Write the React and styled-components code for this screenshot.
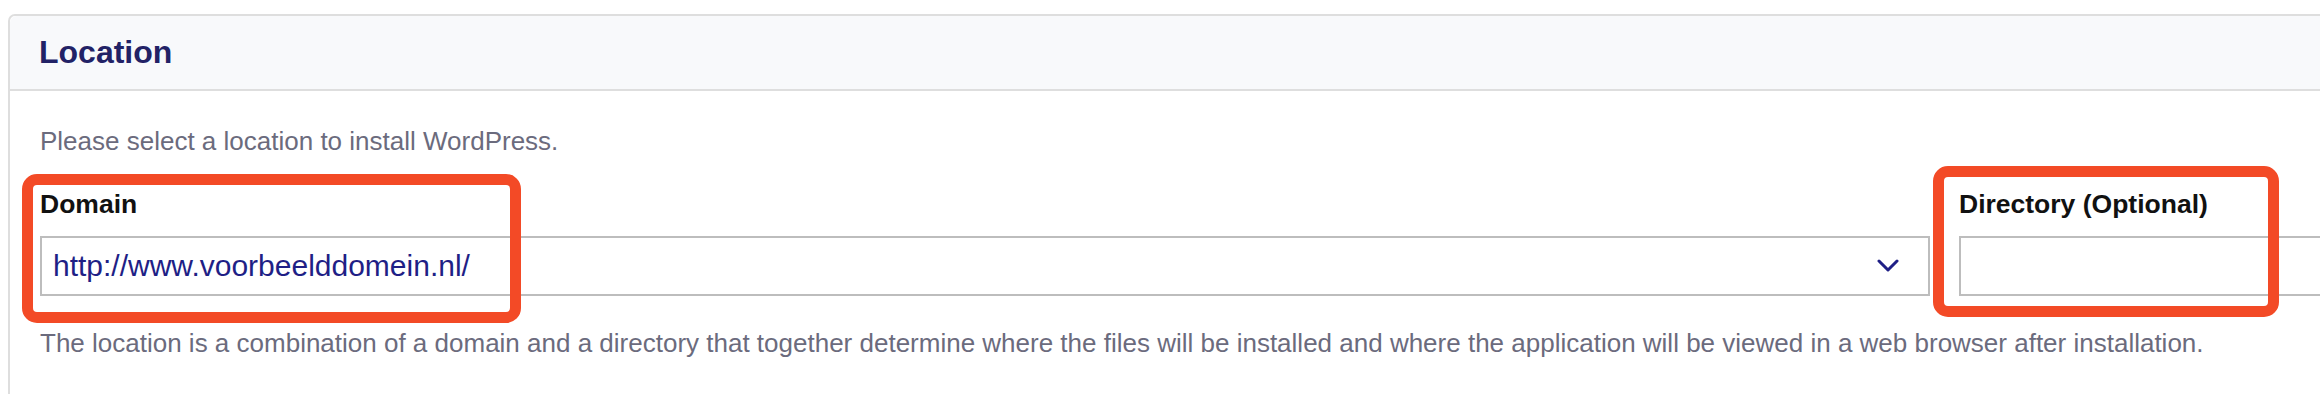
import React from 'react'
import styled, { createGlobalStyle } from 'styled-components'

const GlobalStyle = createGlobalStyle`
  html, body {
    margin: 0;
    padding: 0;
    background: #ffffff;
    overflow: hidden;
  }
  body {
    font-family: "Liberation Sans", Arial, sans-serif;
  }
`

const Page = styled.div`
  padding: 14px 0 0 8px;
`

const Card = styled.section`
  width: 2420px;
  border: 2px solid #dedede;
  border-radius: 7px;
  background: #ffffff;
`

const CardHeader = styled.header`
  height: 73px;
  display: flex;
  align-items: center;
  padding-left: 29px;
  background: #f8f9fb;
  border-bottom: 2px solid #dedede;
  border-radius: 7px 7px 0 0;
`

const Title = styled.h2`
  margin: 0;
  font-size: 32px;
  font-weight: bold;
  color: #222266;
`

const CardBody = styled.div`
  padding: 34px 30px 60px 30px;
`

const Intro = styled.p`
  margin: 0 0 32px 0;
  font-size: 26px;
  line-height: 32px;
  color: #6b6b7d;
`

const Fields = styled.div`
  display: grid;
  grid-template-columns: 1890px 1fr;
  column-gap: 29px;
`

const Field = styled.div`
  position: relative;
  display: flex;
  flex-direction: column;
`

const Label = styled.label`
  font-size: 26.5px;
  line-height: 30px;
  font-weight: bold;
  color: #111111;
  margin-bottom: 17px;
`

const SelectBox = styled.div`
  height: 56px;
  border: 2px solid #bdbdbd;
  display: flex;
  align-items: center;
  justify-content: space-between;
  padding: 0 29px 0 11px;
  background: #ffffff;
`

const SelectValue = styled.span`
  font-size: 30px;
  color: #1f1f86;
`

const TextInput = styled.input`
  box-sizing: border-box;
  height: 60px;
  width: 100%;
  border: 2px solid #bdbdbd;
  border-radius: 0;
  background: #ffffff;
  outline: none;
  font-family: inherit;
  font-size: 30px;
`

const HelpText = styled.p`
  margin: 32px 0 0 0;
  font-size: 26px;
  line-height: 31px;
  color: #6b6b7d;
  white-space: nowrap;
`

const Highlight = styled.div`
  position: absolute;
  left: ${p => p.$left}px;
  top: ${p => p.$top}px;
  width: ${p => p.$width}px;
  height: ${p => p.$height}px;
  box-sizing: border-box;
  border: 11px solid #f34a26;
  border-radius: 15px;
  pointer-events: none;
`

const Chevron = () => (
  <svg width="22" height="14" viewBox="0 0 22 14" fill="none">
    <path d="M2 2 L11 11 L20 2" stroke="#1f1f86" strokeWidth="3" strokeLinecap="round" strokeLinejoin="round" />
  </svg>
)

export default function App() {
  return (
    <>
      <GlobalStyle />
      <Page>
        <Card>
          <CardHeader>
            <Title>Location</Title>
          </CardHeader>
          <CardBody>
            <Intro>Please select a location to install WordPress.</Intro>
            <Fields>
              <Field>
                <Label>Domain</Label>
                <SelectBox>
                  <SelectValue>http://www.voorbeelddomein.nl/</SelectValue>
                  <Chevron />
                </SelectBox>
                <Highlight $left={-18} $top={-15} $width={499} $height={149} />
              </Field>
              <Field>
                <Label>Directory (Optional)</Label>
                <TextInput type="text" />
                <Highlight $left={-26} $top={-23} $width={346} $height={151} />
              </Field>
            </Fields>
            <HelpText>
              The location is a combination of a domain and a directory that together determine where the files will be installed and where the application will be viewed in a web browser after installation.
            </HelpText>
          </CardBody>
        </Card>
      </Page>
    </>
  )
}
